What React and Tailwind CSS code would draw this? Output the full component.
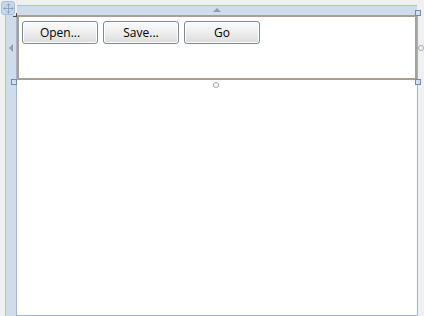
import React from 'react';
import { Move } from 'lucide-react';

function DesignButton({ label }) {
  return (
    <button className="w-[76px] h-[23px] rounded-[3px] border border-[#7d8a9b] bg-gradient-to-b from-[#fbfbfb] via-[#eeeeee] to-[#dcdcdc] shadow-[inset_0_0_0_1px_#ffffff] text-[12px] leading-none text-black font-['Open_Sans',sans-serif]">
      {label}
    </button>
  );
}

function SquareHandle({ className }) {
  return <div className={`absolute w-[6px] h-[6px] border border-[#6f8db2] bg-[#d3e0ef] ${className}`} />;
}

function RoundHandle({ className }) {
  return <div className={`absolute w-[6px] h-[6px] rounded-full border border-[#9aa4b0] bg-white ${className}`} />;
}

export default function App() {
  return (
    <div className="relative w-[424px] h-[316px] overflow-hidden bg-[#f0f0f0] font-['Liberation_Sans',Arial,sans-serif]">
      <div className="flex h-full pl-[5px] pt-[5px]">
        {/* left ruler */}
        <div className="w-[11px] mt-[10px] bg-[#cfdcec] border-l border-[#a6c4ea]" />

        <div className="w-[402px] flex flex-col">
          {/* top ruler */}
          <div className="h-[10px] ml-[1px] mr-[1px] bg-[#cfdcec] border-t border-[#a6c4ea]" />

          {/* design surface */}
          <div className="flex-1 bg-white border border-[#a3b3ca] border-t-0">
            <div className="h-[65px] border-2 border-[#aa9f93] flex items-start gap-[5px] pt-[4px] pl-[3px]">
              <DesignButton label="Open..." />
              <DesignButton label="Save..." />
              <DesignButton label="Go" />
            </div>
          </div>
        </div>
      </div>

      {/* adorners */}
      <div className="absolute left-[1px] top-[1px] w-[14px] h-[14px] rounded-[3px] border border-[#a9bfdc] bg-[#c6d7ee] flex items-center justify-center text-[#7f93ad]">
        <Move size={11} strokeWidth={1.6} />
      </div>
      <div className="absolute left-[13px] top-[13px] w-[4px] h-[4px] border-r border-b border-[#5c4a3a]" />
      <div className="absolute left-[213px] top-[8px] w-0 h-0 border-l-[4px] border-r-[4px] border-b-[4px] border-l-transparent border-r-transparent border-b-[#8e9cab]" />
      <div className="absolute left-[9px] top-[44px] w-0 h-0 border-t-[4px] border-b-[4px] border-r-[4px] border-t-transparent border-b-transparent border-r-[#8e9cab]" />
      <SquareHandle className="left-[11px] top-[79px]" />
      <SquareHandle className="left-[415px] top-[10px]" />
      <SquareHandle className="left-[415px] top-[79px]" />
      <RoundHandle className="left-[418px] top-[45px]" />
      <RoundHandle className="left-[213px] top-[82px]" />
    </div>
  );
}
